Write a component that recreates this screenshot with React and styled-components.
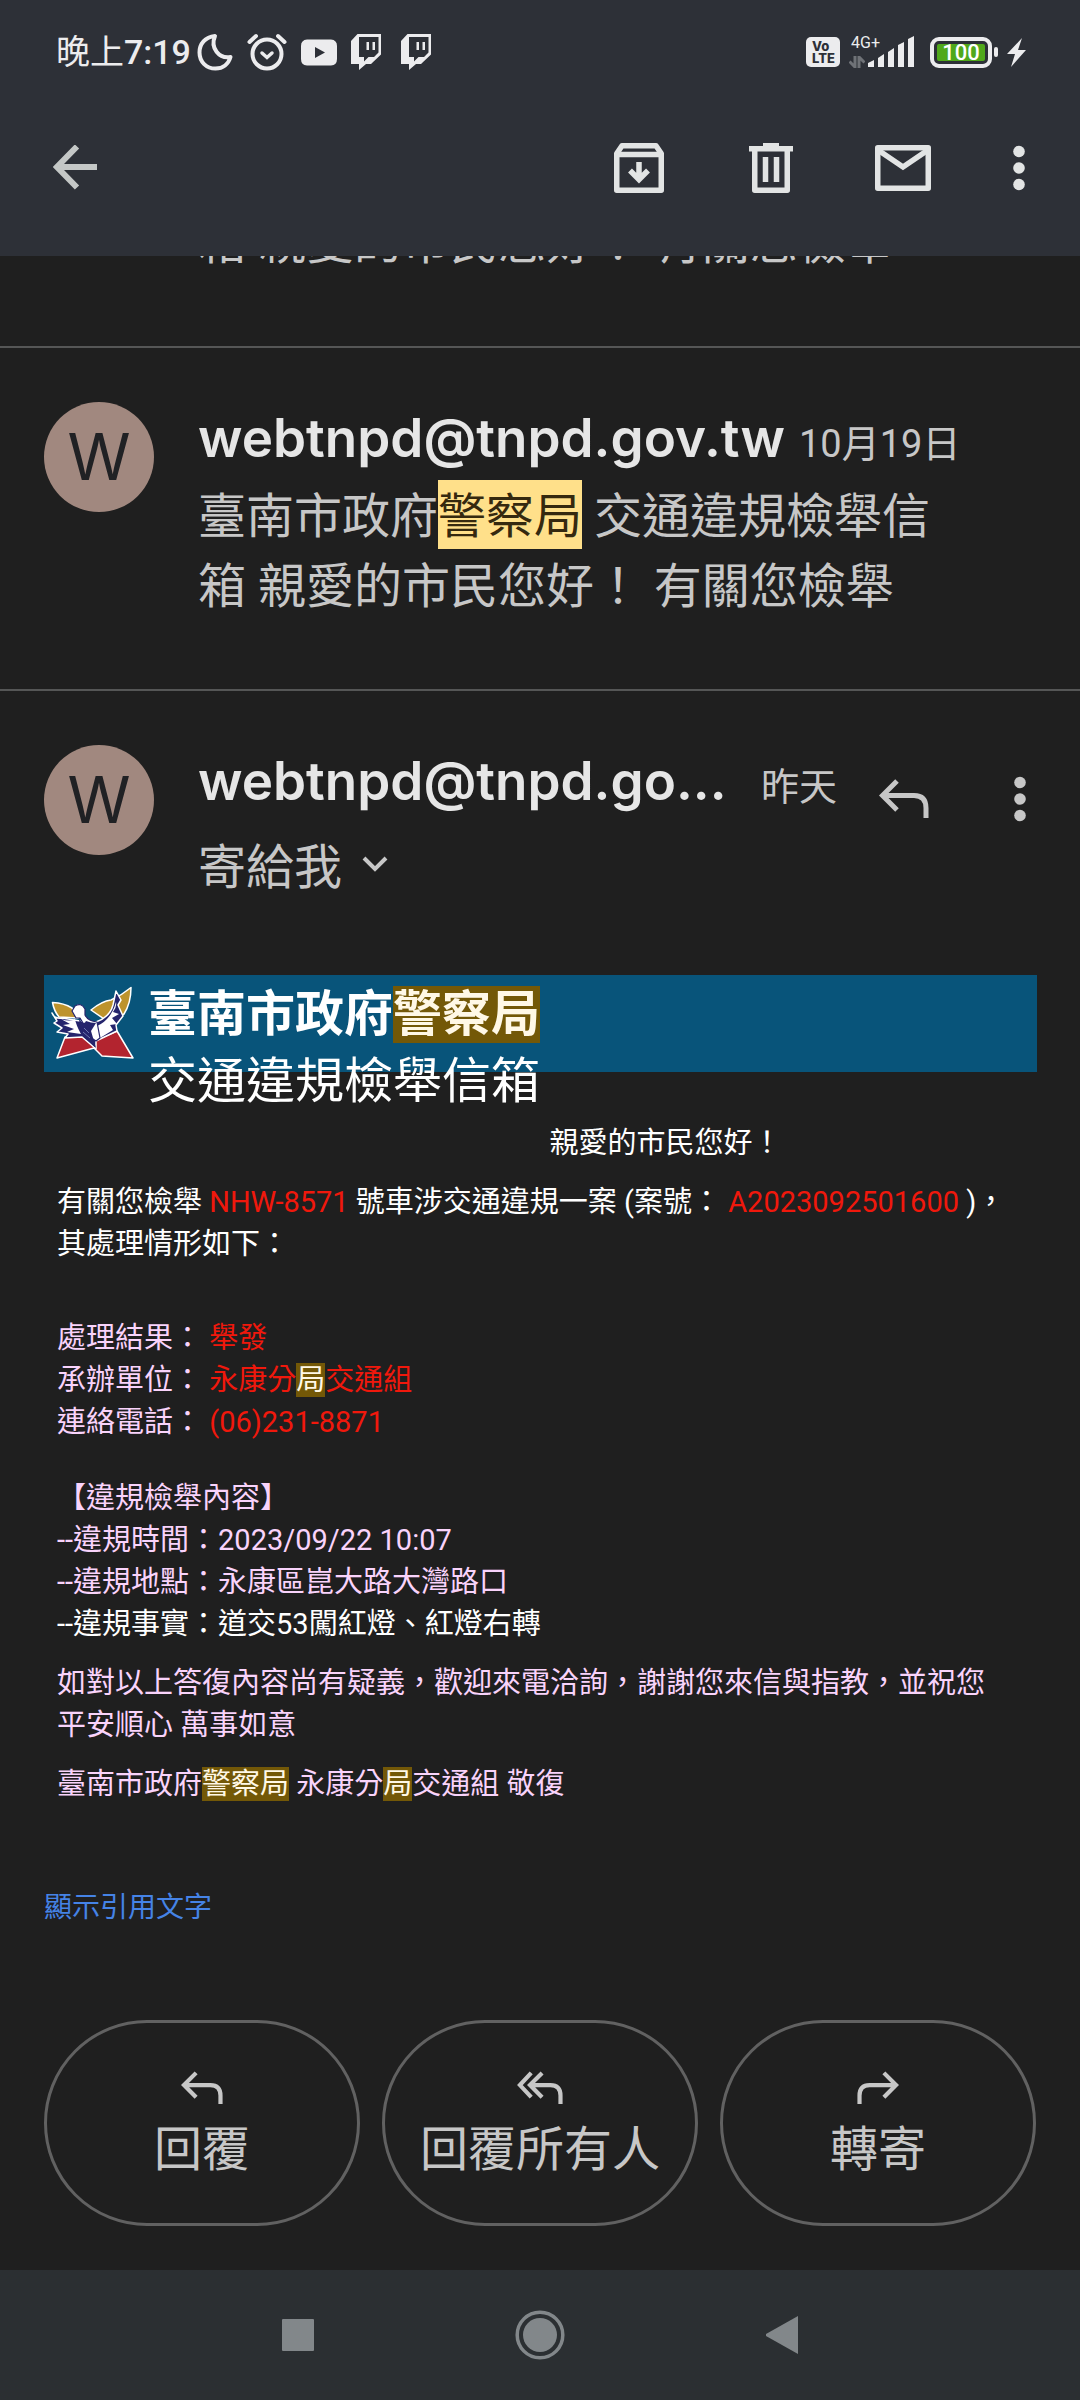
import React from "react";
import styled, { createGlobalStyle } from "styled-components";

const uiFont = `Roboto, "Noto Sans CJK TC", sans-serif`;
const nameFont = `Inter, "Noto Sans CJK TC", sans-serif`;

const Global = createGlobalStyle`
  * { box-sizing: border-box; }
  body { margin: 0; background: #1f1f1f; font-family: ${uiFont}; }
  button { font: inherit; color: inherit; background: none; border: 0; padding: 0; margin: 0; cursor: pointer; }
  p, h1, h2 { margin: 0; font-weight: 400; }
  svg { display: block; }
`;

const Screen = styled.div`
  min-height: 100vh;
  display: flex;
  flex-direction: column;
  color: #c7c7c7;
`;

const Top = styled.header`
  background: #2d3037;
`;

const StatusBar = styled.div`
  display: flex;
  align-items: center;
  justify-content: space-between;
  height: 80px;
  padding: 24px 54px 0 56px;
  color: #ececee;
`;

const StatusGroup = styled.div`
  display: flex;
  align-items: center;
  gap: ${(p) => p.$gap}px;
`;

const Clock = styled.span`
  font-size: 34px;
  line-height: 40px;
  font-weight: 500;
`;

const ClockPeriod = styled.span`
  font-weight: 400;
`;

const VoLte = styled.span`
  display: grid;
  place-content: center start;
  width: 34px;
  height: 30px;
  padding-left: 6px;
  border-radius: 5px;
  background: #ececee;
  color: #2d3037;
  font-family: Inter, sans-serif;
  font-size: 13px;
  font-weight: 800;
  line-height: 12px;
`;

const Network = styled.span`
  display: grid;
  grid-template-columns: 18px 50px;
  align-items: end;
  height: 32px;
  margin-right: 4px;
  position: relative;
`;

const NetworkType = styled.span`
  position: absolute;
  top: -1px;
  left: 2px;
  font-size: 16px;
  line-height: 16px;
`;

const Battery = styled.span`
  display: flex;
  align-items: center;
  gap: 2px;
  &::after {
    content: "";
    width: 4px;
    height: 10px;
    border-radius: 2px;
    background: #ececee;
  }
`;

const BatteryBody = styled.span`
  display: grid;
  place-items: center;
  width: 62px;
  height: 31px;
  border: 4px solid #ececee;
  border-radius: 9px;
  padding: 3px;
`;

const BatteryLevel = styled.span`
  width: 100%;
  height: 17px;
  border-radius: 2px;
  background: #50a81b;
  color: #fff;
  font-size: 22px;
  font-weight: 500;
  line-height: 18px;
  text-align: center;
`;

const Toolbar = styled.nav`
  display: flex;
  align-items: center;
  height: 176px;
  padding: 0 44px 0 42px;
  color: #e2e4e4;
`;

const ToolbarActions = styled.div`
  display: flex;
  align-items: center;
  margin-left: auto;
  gap: 66px;
`;

const IconButton = styled.button`
  display: grid;
  place-items: center;
  flex: none;
  width: ${(p) => (p.$narrow ? 34 : 66)}px;
  height: 66px;
`;

const Thread = styled.main`
  flex: 1;
  display: flex;
  flex-direction: column;
`;

const Clipped = styled.section`
  flex: none;
  display: flex;
  flex-direction: column;
  justify-content: flex-end;
  height: 90px;
  padding: 0 110px 68px 198px;
  overflow: hidden;
`;

const Message = styled.article`
  display: grid;
  grid-template-columns: 110px minmax(0, 1fr);
  column-gap: 44px;
  border-top: 2px solid #555656;
  padding: 54px ${(p) => p.$right}px ${(p) => p.$bottom}px 44px;
`;

const Avatar = styled.span`
  display: grid;
  place-items: center;
  width: 110px;
  height: 110px;
  border-radius: 50%;
  background: #a1887f;
  color: #202124;
  font-family: ${nameFont};
  font-size: 64px;
  line-height: 110px;
`;

const Heading = styled.div`
  display: flex;
  align-items: baseline;
  gap: 14px;
  padding-bottom: 2px;
  line-height: 72px;
`;

const Sender = styled.h2`
  white-space: nowrap;
  font-family: ${nameFont};
  font-size: 53px;
  font-weight: 600;
  color: #e6e6e6;
`;

const When = styled.time`
  flex: none;
  font-size: 38px;
  margin-left: ${(p) => (p.$end ? "auto" : "0")};
`;

const Snippet = styled.p`
  font-size: 48px;
  line-height: 70px;
`;

const Mark = styled.mark`
  background: ${(p) => (p.$light ? "#ffe08a" : "#735807")};
  color: ${(p) => (p.$light ? "#35290f" : "#fff8e6")};
  padding: ${(p) => (p.$light ? "8px 0 4px" : "0")};
`;

const OpenHead = styled.div`
  display: grid;
  grid-template-columns: minmax(0, 1fr) auto;
  height: 175px;
`;

const HeadActions = styled.div`
  display: flex;
  gap: 50px;
  padding: 21px 0 0 34px;
`;

const Recipient = styled.button`
  display: flex;
  align-items: center;
  gap: 20px;
  font-size: 48px;
  line-height: 70px;
  margin-top: 8px;
`;

const Mail = styled.section`
  padding: 0 43px 0 44px;
`;

const Banner = styled.div`
  display: flex;
  gap: 14px;
  height: 97px;
  padding: 6px 6px 0;
  background: #08547a;
  color: #fff;
`;

const BannerTitle = styled.h1`
  font-size: 49px;
  line-height: 67px;
`;

const MailBody = styled.div`
  display: flex;
  flex-direction: column;
  gap: 17px;
  padding: 50px 13px 0;
  font-size: 29px;
  line-height: 42px;
  color: #f9d3fb;
`;

const Para = styled.p`
  color: ${(p) => (p.$white ? "#fff" : "inherit")};
  padding-left: ${(p) => (p.$aside ? "250px" : "0")};
  text-align: ${(p) => (p.$aside ? "center" : "left")};
  margin-top: ${(p) => p.$space || 0}px;
`;

const Red = styled.span`
  color: #f0180c;
`;

const White = styled.span`
  color: #fff;
`;

const Quoted = styled.a`
  display: inline-block;
  margin-top: 82px;
  font-size: 28px;
  line-height: 42px;
  color: #4583e6;
  text-decoration: none;
`;

const Replies = styled.div`
  display: grid;
  grid-template-columns: repeat(3, 1fr);
  gap: 22px;
  padding: 91px 44px 44px;
`;

const ReplyButton = styled.button`
  display: flex;
  flex-direction: column;
  align-items: center;
  justify-content: center;
  gap: 10px;
  height: 206px;
  padding-top: 10px;
  border: 3px solid #616161;
  border-radius: 103px;
  font-size: 48px;
  line-height: 70px;
  white-space: nowrap;
`;

const SystemNav = styled.nav`
  display: flex;
  align-items: center;
  justify-content: center;
  gap: 174px;
  height: 130px;
  background: #2b2f32;
  color: #82878a;
`;

const Moon = () => (
  <svg width="36" height="38" viewBox="0 0 36 38" fill="none" stroke="currentColor" strokeWidth="4" strokeLinejoin="round">
    <path d="M18 3C8 4 2.500 11 2.500 19.500C2.500 29 9.500 35.500 18.500 35.500C26 35.500 31.500 31 33.500 24C22 26 13 15 18 3Z" />
  </svg>
);

const Alarm = () => (
  <svg width="40" height="38" viewBox="0 0 40 38" fill="none" stroke="currentColor" strokeWidth="4" strokeLinecap="round">
    <circle cx="20" cy="21" r="14.500" />
    <path d="M2.500 9L9 3M37.500 9L31 3" />
    <path d="M15 20L20 24.500L25 20" strokeWidth="3.500" />
  </svg>
);

const Youtube = () => (
  <svg width="36" height="27" viewBox="0 0 36 27">
    <path fill="currentColor" fillRule="evenodd" d="M6 0.500H30Q36 1 36 7V20Q36 26 30 26.500H6Q0 26 0 20V7Q0 1 6 0.500ZM14 8V19L24 13.500Z" />
  </svg>
);

const Twitch = () => (
  <svg width="30" height="36" viewBox="0 0 30 36">
    <path fill="currentColor" fillRule="evenodd" d="M6.500 0H30V20.500L20 30H15L8 36V30H0V7ZM8 3V23H13V27.500L17.500 23H23L27.500 18.500V3ZM15.500 8H18V16H15.500ZM21.500 8H24V16H21.500Z" />
  </svg>
);

const DataArrows = () => (
  <svg width="16" height="12" viewBox="0 0 16 12" fill="none" stroke="#6f7277" strokeWidth="3">
    <path d="M6 0V11L0.500 5.500M10 12V1L15.500 6.500" />
  </svg>
);

const Bars = () => (
  <svg width="50" height="32" viewBox="0 0 50 32" fill="currentColor">
    <path d="M1 27L7 24V31H1ZM11 22L17 18V31H11ZM21 16L27 12V31H21ZM31 9L37 6V31H31ZM41 3L47 0V31H41Z" />
  </svg>
);

const Bolt = () => (
  <svg width="19" height="29" viewBox="0 0 19 29" fill="currentColor">
    <path d="M15 0L0 16H8L4 29L19 12H11Z" />
  </svg>
);

const Back = () => (
  <svg width="44" height="46" viewBox="0 0 44 46" fill="none" stroke="#c4c7c6" strokeWidth="6">
    <path d="M44 22H4M24 1.500L4 22L24 42.500" />
  </svg>
);

const Archive = () => (
  <svg width="50" height="50" viewBox="0 0 50 50" fill="none" stroke="currentColor" strokeWidth="5.500" strokeLinejoin="round">
    <path d="M2.750 10.500L8 2.750H42L47.250 10.500V47.250H2.750ZM2.750 11.500H47.250" />
    <path d="M25 19V36M16 27.500L25 36.500L34 27.500" strokeLinejoin="miter" />
  </svg>
);

const Trash = () => (
  <svg width="44" height="50" viewBox="0 0 44 50" fill="none" stroke="currentColor" strokeWidth="5.500">
    <path d="M0 5.750H44M14 2.750H30" />
    <path d="M5.750 7V47.250H38.250V7" strokeLinejoin="round" />
    <path d="M16.500 14V39M27.500 14V39" />
  </svg>
);

const Envelope = () => (
  <svg width="56" height="46" viewBox="0 0 56 46" fill="none" stroke="currentColor" strokeWidth="5.500" strokeLinejoin="round">
    <path d="M2.750 2.750H53.250V43.250H2.750Z" />
    <path d="M3 5L28 22L53 5" strokeLinejoin="miter" />
  </svg>
);

const Dots = () => (
  <svg width="12" height="46" viewBox="0 0 12 46" fill="currentColor">
    <circle cx="6" cy="6.500" r="5.800" />
    <circle cx="6" cy="23" r="5.800" />
    <circle cx="6" cy="39.500" r="5.800" />
  </svg>
);

const Reply = ({ size = 42, flip }) => (
  <svg width={size} height={Math.round(size * 0.8)} viewBox="0 0 50 40" fill="none" stroke="currentColor" strokeWidth="5">
    <path
      transform={flip ? "translate(50 0) scale(-1 1)" : undefined}
      d="M18 2L3.500 16.500L18 31M4 16.500H35Q47 16.500 47 29V39"
    />
  </svg>
);

const ReplyAll = () => (
  <svg width="46" height="34" viewBox="0 0 55 40" fill="none" stroke="currentColor" strokeWidth="5">
    <path d="M17 2L3.500 16.500L17 31M30 2L15.500 16.500L30 31M16 16.500H40Q52 16.500 52 29V39" />
  </svg>
);

const Chevron = () => (
  <svg width="26" height="24" viewBox="0 0 26 24" fill="none" stroke="currentColor" strokeWidth="4">
    <path d="M2 2L13 13L24 2" />
  </svg>
);

const Emblem = () => (
  <svg width="84" height="84" viewBox="0 0 84 84" strokeLinejoin="round">
    <path d="M15 56L7 77L44 67L52 75L83 77L67 50L46 59L30 55Z" fill="#b3242f" stroke="#fff" strokeWidth="1.500" />
    <path d="M2.500 21.500Q14 22 22 27L28 37L9 36Q4 30 2.500 21.500Z" fill="#bd932c" stroke="#fff" strokeWidth="1.500" />
    <path d="M41 29Q52 20 61 19Q72 14 81 6.500Q81 22 74 33L60 42Z" fill="#bd932c" stroke="#fff" strokeWidth="1.500" />
    <path d="M2 32Q4 38 12 37L30 40L46 41Q60 36 63 24L66 10L71 19L68 24L73 35L66 44L67 50L46 60L46 68L32 56L15 57L18 53L7 51L12 47L4 42L7 40Z" fill="#25246c" stroke="#fff" strokeWidth="1.500" />
    <path d="M11 38Q20 41 25 38Q26 44 31 53L17 51L24 48L13 44L20 43Z" fill="#fff" />
    <path d="M66 21Q67 26 63 31L69 33L62 37L67 43L60 44L63 49L50 57Q46 52 47 45Q61 39 66 21Z" fill="#fff" />
    <path d="M22 30L25 25Q31 21 35 28V34Q38 40 47 41L50 57L46 60Q39 57 36 47L30 37L26 37Z" fill="#fff" stroke="#25246c" strokeWidth="1.200" />
    <path d="M29 38Q34 45 36 40Q41 42 46 42L41 50L46 67L31 53Z" fill="#25246c" />
    <path d="M34 47L39 52M33 51L40 57" stroke="#6d74ad" strokeWidth="1" />
  </svg>
);

const Recents = () => (
  <svg width="32" height="32" viewBox="0 0 32 32"><rect width="32" height="32" rx="1" fill="currentColor" /></svg>
);

const Home = () => (
  <svg width="50" height="50" viewBox="0 0 50 50">
    <circle cx="25" cy="25" r="22.800" fill="none" stroke="currentColor" strokeWidth="3.500" />
    <circle cx="25" cy="25" r="17" fill="currentColor" />
  </svg>
);

const NavBack = () => (
  <svg width="32" height="38" viewBox="0 0 32 38"><path d="M32 0V38L0 20V18Z" fill="currentColor" /></svg>
);

const NavButton = styled.button`
  display: grid;
  place-items: center;
  width: 68px;
  height: 68px;
`;

export default function App() {
  return (
    <>
      <Global />
      <Screen>
        <Top>
          <StatusBar>
            <StatusGroup $gap={6}>
              <Clock><ClockPeriod>晚上</ClockPeriod>7:19</Clock>
              <StatusGroup $gap={14}>
                <Moon />
                <Alarm />
                <Youtube />
                <StatusGroup $gap={20}>
                  <Twitch />
                  <Twitch />
                </StatusGroup>
              </StatusGroup>
            </StatusGroup>
            <StatusGroup $gap={9}>
              <VoLte><span>Vo</span><span>LTE</span></VoLte>
              <Network>
                <NetworkType>4G+</NetworkType>
                <DataArrows />
                <Bars />
              </Network>
              <Battery><BatteryBody><BatteryLevel>100</BatteryLevel></BatteryBody></Battery>
              <Bolt />
            </StatusGroup>
          </StatusBar>
          <Toolbar>
            <IconButton aria-label="返回"><Back /></IconButton>
            <ToolbarActions>
              <IconButton aria-label="封存"><Archive /></IconButton>
              <IconButton aria-label="刪除"><Trash /></IconButton>
              <IconButton aria-label="標示為未讀"><Envelope /></IconButton>
              <IconButton $narrow aria-label="更多選項"><Dots /></IconButton>
            </ToolbarActions>
          </Toolbar>
        </Top>

        <Thread>
          <Clipped>
            <Snippet>箱 親愛的市民您好！ 有關您檢舉</Snippet>
          </Clipped>

          <Message $right={110} $bottom={67}>
            <Avatar>W</Avatar>
            <div>
              <Heading>
                <Sender>webtnpd@tnpd.gov.tw</Sender>
                <When>10月19日</When>
              </Heading>
              <Snippet>
                臺南市政府<Mark $light>警察局</Mark> 交通違規檢舉信<br />箱 親愛的市民您好！ 有關您檢舉
              </Snippet>
            </div>
          </Message>

          <Message $right={27} $bottom={55}>
            <Avatar>W</Avatar>
            <OpenHead>
              <div>
                <Heading>
                  <Sender>webtnpd@tnpd.go...</Sender>
                  <When $end>昨天</When>
                </Heading>
                <Recipient>寄給我<Chevron /></Recipient>
              </div>
              <HeadActions>
                <IconButton aria-label="回覆"><Reply size={50} /></IconButton>
                <IconButton aria-label="更多"><Dots /></IconButton>
              </HeadActions>
            </OpenHead>
          </Message>

          <Mail>
            <Banner>
              <Emblem />
              <BannerTitle>
                <b>臺南市政府<Mark>警察局</Mark></b><br />交通違規檢舉信箱
              </BannerTitle>
            </Banner>
            <MailBody>
              <Para $white $aside>親愛的市民您好！</Para>
              <Para $white>
                有關您檢舉 <Red>NHW-8571</Red> 號車涉交通違規一案 (案號： <Red>A2023092501600</Red> )，<br />其處理情形如下：
              </Para>
              <Para $space={35}>
                處理結果： <Red>舉發</Red><br />
                承辦單位： <Red>永康分<Mark>局</Mark>交通組</Red><br />
                連絡電話： <Red>(06)231-8871</Red>
              </Para>
              <Para $space={17}>
                【違規檢舉內容】<br />
                --違規時間：2023/09/22 10:07<br />
                --違規地點：永康區崑大路大灣路口<br />
                <White>--違規事實：道交53闖紅燈、紅燈右轉</White>
              </Para>
              <Para>
                如對以上答復內容尚有疑義，歡迎來電洽詢，謝謝您來信與指教，並祝您<br />平安順心 萬事如意
              </Para>
              <Para>
                臺南市政府<Mark>警察局</Mark> 永康分<Mark>局</Mark>交通組 敬復
              </Para>
            </MailBody>
            <Quoted href="#quoted">顯示引用文字</Quoted>
          </Mail>

          <Replies>
            <ReplyButton><Reply />回覆</ReplyButton>
            <ReplyButton><ReplyAll />回覆所有人</ReplyButton>
            <ReplyButton><Reply flip />轉寄</ReplyButton>
          </Replies>
        </Thread>

        <SystemNav>
          <NavButton aria-label="最近使用"><Recents /></NavButton>
          <NavButton aria-label="主畫面"><Home /></NavButton>
          <NavButton aria-label="返回上一頁"><NavBack /></NavButton>
        </SystemNav>
      </Screen>
    </>
  );
}
